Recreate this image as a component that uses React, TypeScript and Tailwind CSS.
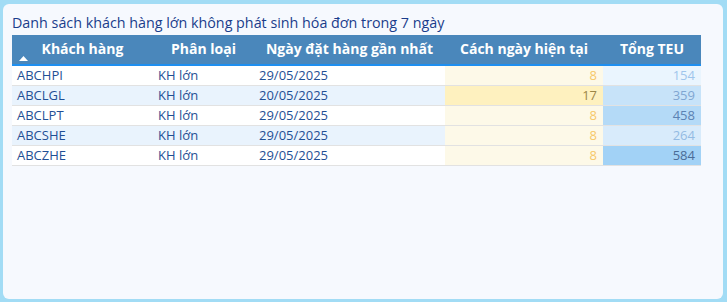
const rows = [
  { code: "ABCHPI", type: "KH lớn", date: "29/05/2025", days: 8, teu: 154 },
  { code: "ABCLGL", type: "KH lớn", date: "20/05/2025", days: 17, teu: 359 },
  { code: "ABCLPT", type: "KH lớn", date: "29/05/2025", days: 8, teu: 458 },
  { code: "ABCSHE", type: "KH lớn", date: "29/05/2025", days: 8, teu: 264 },
  { code: "ABCZHE", type: "KH lớn", date: "29/05/2025", days: 8, teu: 584 },
];

// conditional formatting colours, keyed by value
const teuStyle: Record<number, string> = {
  154: "bg-[#eaf5fe] text-[#9fc5ec]",
  359: "bg-[#c7e3f9] text-[#7fa6d2]",
  458: "bg-[#b4daf7] text-[#5a82b3]",
  264: "bg-[#d8ebfb] text-[#94bbe3]",
  584: "bg-[#a2d2f6] text-[#4a6c97]",
};

const cols = "grid grid-cols-[141px_101px_191px_158px_98px]";

export default function App() {
  return (
    <div className="w-[727px] h-[302px] bg-[#a2dcf5] pl-[3px] pt-[4px] pr-[4px] pb-[3px]" style={{ fontFamily: '"Open Sans", "Noto Sans", sans-serif' }}>
      <div className="h-full bg-[#f6f9fe] rounded-[6px] pl-[9px] pt-[9px]">
        <div className="text-[14.3px] leading-[20px] text-[#1a3d8c]">
          Danh sách khách hàng lớn không phát sinh hóa đơn trong 7 ngày
        </div>

        <div className="w-[689px] mt-[2px]">
          <div className={`${cols} h-[31px] bg-[#4a87bb] border-b-2 border-[#1e8ff0] text-white font-bold text-[14px] relative`}>
            {["Khách hàng", "Phân loại", "Ngày đặt hàng gần nhất", "Cách ngày hiện tại", "Tổng TEU"].map((h) => (
              <div key={h} className="flex items-center justify-center pb-[2px]">{h}</div>
            ))}
            <svg className="absolute left-[7px] bottom-[3px]" width="9" height="5" viewBox="0 0 9 5">
              <polygon points="0,5 4.5,0 9,5" fill="#ffffff" />
            </svg>
          </div>

          {rows.map((r, i) => (
            <div
              key={r.code}
              className={`${cols} h-[20px] border-b border-[#e2e2e2] text-[13px] leading-[19px] text-[#1f4f95] ${i % 2 ? "bg-[#e9f3fd]" : "bg-white"}`}
            >
              <div className="pl-[5px]">{r.code}</div>
              <div className="pl-[5px]">{r.type}</div>
              <div className="pl-[5px]">{r.date}</div>
              <div className={`text-right pr-[6px] ${r.days > 10 ? "bg-[#fef1bf] text-[#9c8646]" : "bg-[#fdf9e8] text-[#f6c86a]"}`}>
                {r.days}
              </div>
              <div className={`text-right pr-[6px] ${teuStyle[r.teu]}`}>{r.teu}</div>
            </div>
          ))}
        </div>
      </div>
    </div>
  );
}
